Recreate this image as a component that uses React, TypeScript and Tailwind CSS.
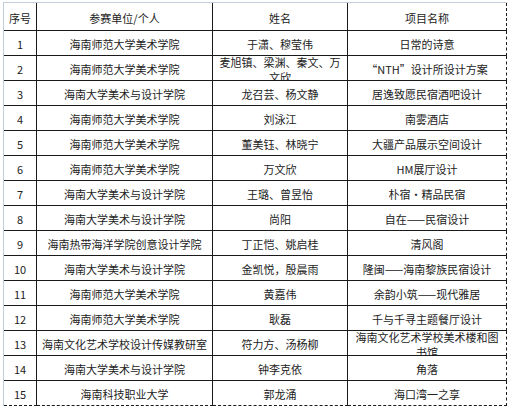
const rows: [string, string, string, string][] = [
  ["1", "海南师范大学美术学院", "于潇、穆莹伟", "日常的诗意"],
  ["2", "海南师范大学美术学院", "麦旭镇、梁渊、秦文、万文欣", "“NTH”设计所设计方案"],
  ["3", "海南大学美术与设计学院", "龙召芸、杨文静", "居逸致愿民宿酒吧设计"],
  ["4", "海南师范大学美术学院", "刘泳江", "南雾酒店"],
  ["5", "海南师范大学美术学院", "董美钰、林晓宁", "大疆产品展示空间设计"],
  ["6", "海南师范大学美术学院", "万文欣", "HM展厅设计"],
  ["7", "海南大学美术与设计学院", "王璐、曾昱怡", "朴宿・精品民宿"],
  ["8", "海南大学美术与设计学院", "尚阳", "自在——民宿设计"],
  ["9", "海南热带海洋学院创意设计学院", "丁正恺、姚启桂", "清风阁"],
  ["10", "海南大学美术与设计学院", "金凯悦，殷晨雨", "隆闽——海南黎族民宿设计"],
  ["11", "海南师范大学美术学院", "黄嘉伟", "余韵小筑——现代雅居"],
  ["12", "海南师范大学美术学院", "耿磊", "千与千寻主题餐厅设计"],
  ["13", "海南文化艺术学校设计传媒教研室", "符力方、汤杨柳", "海南文化艺术学校美术楼和图书馆"],
  ["14", "海南大学美术与设计学院", "钟李克依", "角落"],
  ["15", "海南科技职业大学", "郭龙涌", "海口湾一之享"],
];

const header = ["序号", "参赛单位/个人", "姓名", "项目名称"];

const Cell = ({
  text,
  last,
  bottom,
}: {
  text: string;
  last?: boolean;
  bottom?: boolean;
}) => (
  <div
    className={
      "flex items-center justify-center overflow-hidden border-b border-r border-[#1a1a1a] px-1 pt-[3px] text-center leading-[15px] " +
      (last ? "[border-right-style:dashed] " : "") +
      (bottom ? "[border-bottom-style:dashed]" : "")
    }
  >
    <span className="block">{text}</span>
  </div>
);

export default function App() {
  return (
    <div
      className="h-[411px] w-[512px] overflow-hidden bg-white pl-[3px] pt-[2px] text-[11px] text-[#222]"
      style={{ fontFamily: '"Noto Sans CJK SC", "Noto Sans", sans-serif' }}
    >
      <div className="w-[504px] border-l border-t border-[#c3ccd9]">
        <div className="grid h-[28px] grid-cols-[33px_176px_135px_159px]">
          {header.map((h, i) => (
            <Cell key={h} text={h} last={i === 3} />
          ))}
        </div>
        {rows.map((r, ri) => (
          <div
            key={r[0]}
            className="grid h-[25px] grid-cols-[33px_176px_135px_159px]"
          >
            {r.map((t, i) => (
              <Cell
                key={i}
                text={t}
                last={i === 3}
                bottom={ri === rows.length - 1}
              />
            ))}
          </div>
        ))}
      </div>
    </div>
  );
}
